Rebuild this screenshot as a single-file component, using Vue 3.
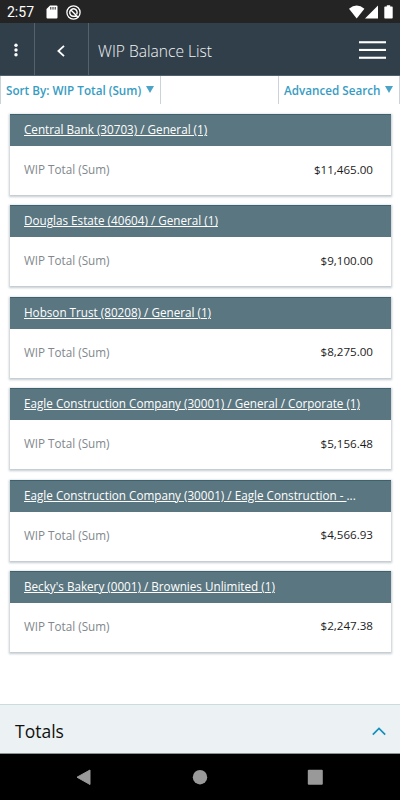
<script setup>
import { ref } from "vue";

const amountLabel = "WIP Total (Sum)";

const items = ref([
  { name: "Central Bank (30703) / General (1)", total: "$11,465.00" },
  { name: "Douglas Estate (40604) / General (1)", total: "$9,100.00" },
  { name: "Hobson Trust (80208) / General (1)", total: "$8,275.00" },
  { name: "Eagle Construction Company (30001) / General / Corporate (1)", total: "$5,156.48" },
  { name: "Eagle Construction Company (30001) / Eagle Construction - ", more: "...", total: "$4,566.93" },
  { name: "Becky's Bakery (0001) / Brownies Unlimited (1)", total: "$2,247.38" },
]);
</script>

<template>
  <div class="screen">
    <div class="status">
      <span class="clock">2:57</span>
      <svg class="sd" width="12" height="14" viewBox="0 0 12 14">
        <path d="M4 0.5H10.5Q11.5 0.5 11.5 1.5V12.5Q11.5 13.5 10.5 13.5H1.5Q0.5 13.5 0.5 12.5V4Z" fill="#fff" />
        <path d="M4.8 2V4.6M7 2V4.6M9.2 2V4.6" stroke="#242424" stroke-width="1" />
      </svg>
      <svg class="sync" width="15" height="15" viewBox="0 0 15 15" fill="none" stroke="#fff">
        <circle cx="7.5" cy="7.5" r="6.6" stroke-width="1.3" />
        <path d="M10.6 9.4A3.7 3.7 0 1 0 7.5 11.2H10.4M5.4 5.4L11.8 12" stroke-width="1.4" />
      </svg>
      <svg class="signals" width="45" height="15" viewBox="0 0 45 15" fill="#fff">
        <path d="M0 3.8Q7.7 -2.8 15.4 3.8L7.7 13.5Z" />
        <path d="M29 0.5V13.5H16Z" />
        <path d="M37.8 0.2H41.2V1.6H43Q43.7 1.6 43.7 2.3V12.8Q43.7 13.5 43 13.5H36Q35.3 13.5 35.3 12.8V2.3Q35.3 1.6 36 1.6H37.8Z" />
      </svg>
    </div>

    <div class="header">
      <div class="cell dots">
        <svg width="6" height="14" viewBox="0 0 6 14" fill="#fff">
          <circle cx="3" cy="2.2" r="1.7" />
          <circle cx="3" cy="7" r="1.7" />
          <circle cx="3" cy="11.8" r="1.7" />
        </svg>
      </div>
      <div class="cell back">
        <svg width="8" height="12" viewBox="0 0 8 12" fill="none" stroke="#fff" stroke-width="1.8">
          <path d="M7 0.8L1.4 6L7 11.2" />
        </svg>
      </div>
      <h1>WIP Balance List</h1>
      <svg class="burger" width="27" height="19" viewBox="0 0 27 19" fill="#fff">
        <rect y="0.2" width="27" height="2.1" />
        <rect y="7.9" width="27" height="2.1" />
        <rect y="15.7" width="27" height="2.1" />
      </svg>
    </div>

    <div class="filters">
      <div class="filter sort">
        <span>Sort By: WIP Total (Sum)</span>
        <svg width="8" height="7" viewBox="0 0 8 7"><path d="M0 0H8L4 7Z" fill="#4ba3c7" /></svg>
      </div>
      <div class="filter search">
        <span>Advanced Search</span>
        <svg width="8" height="7" viewBox="0 0 8 7"><path d="M0 0H8L4 7Z" fill="#4ba3c7" /></svg>
      </div>
    </div>

    <div class="list">
      <div class="card" v-for="item in items" :key="item.name">
        <div class="card-head">
          <a>{{ item.name }}</a><span v-if="item.more">{{ item.more }}</span>
        </div>
        <div class="card-body">
          <span class="label">{{ amountLabel }}</span>
          <span class="amount">{{ item.total }}</span>
        </div>
      </div>
    </div>

    <div class="totals">
      <span>Totals</span>
      <svg width="14" height="9" viewBox="0 0 14 9" fill="none" stroke="#1490bd" stroke-width="1.7">
        <path d="M0.8 7.7L7 1.4L13.2 7.7" />
      </svg>
    </div>

    <div class="navbar">
      <svg width="16" height="17" viewBox="0 0 16 17"><path d="M14 1V15.5L1 8.2Z" fill="#999" stroke="#999" stroke-linejoin="round" /></svg>
      <svg width="16" height="17" viewBox="0 0 16 17"><circle cx="8" cy="8.2" r="7.2" fill="#999" /></svg>
      <svg width="16" height="17" viewBox="0 0 16 17"><rect x="0.8" y="0.8" width="15" height="15" rx="1" fill="#999" /></svg>
    </div>
  </div>
</template>

<style>
body {
  margin: 0;
  background: #fff;
}
</style>

<style scoped>
* {
  box-sizing: border-box;
}
.screen {
  width: 400px;
  height: 800px;
  display: flex;
  flex-direction: column;
  overflow: hidden;
  background: #fff;
  font-family: "Open Sans", "Noto Sans", sans-serif;
  font-size: 11.7px;
}
.status {
  height: 23px;
  flex: none;
  display: flex;
  align-items: center;
  padding: 1px 6px 0 7px;
  background: #242424;
}
.clock {
  width: 39px;
  color: #fff;
  font-family: Roboto, sans-serif;
  font-size: 14px;
}
.sync {
  margin-left: 8px;
}
.signals {
  margin-left: auto;
}
.header {
  height: 53px;
  flex: none;
  display: flex;
  align-items: center;
  background: #313f4b;
  border-bottom: 1px solid #51606d;
}
.cell {
  height: 100%;
  display: flex;
  align-items: center;
  justify-content: center;
  border-right: 1px solid #55616b;
}
.dots {
  width: 35px;
  padding: 1px 2px 0 0;
}
.back {
  width: 54px;
  padding: 4px 1px 0 0;
}
h1 {
  margin: 3px 0 0 9px;
  color: #f2f4f6;
  font-size: 15.6px;
  font-weight: 300;
}
.burger {
  margin: 3px 14px 0 auto;
}
.filters {
  height: 28px;
  flex: none;
  display: flex;
  justify-content: space-between;
  border-left: 1px solid #cbd3da;
  border-right: 1px solid #cbd3da;
}
.filter {
  display: flex;
  align-items: center;
  justify-content: space-between;
  color: #379cc3;
  font-weight: 600;
  white-space: nowrap;
}
.sort {
  width: 160px;
  padding: 0 6px 0 5px;
  border-right: 1px solid #cbd3da;
}
.search {
  width: 121px;
  padding: 0 6px 0 5px;
  border-left: 1px solid #cbd3da;
}
.filter span {
  margin-bottom: 1px;
}
.filter svg {
  margin-bottom: 1px;
}
.list {
  flex: 1;
  padding: 10px 9px 0 10px;
}
.card {
  height: 81px;
  margin-bottom: 10.4px;
  background: #fff;
  box-shadow: 0 1px 2px 1px rgba(80, 105, 120, 0.35);
}
.card-head {
  height: 32px;
  padding-left: 14px;
  line-height: 29px;
  color: #fff;
  background: #5a7680;
  border-top: 1px solid #3d626e;
  white-space: pre;
}
.card-head a {
  text-decoration: underline;
}
.card-body {
  height: 49px;
  display: flex;
  align-items: center;
  justify-content: space-between;
  padding: 0 18px 3px 14px;
}
.label {
  color: #81878c;
}
.amount {
  color: #1c1c1c;
  font-size: 11.6px;
}
.totals {
  height: 50px;
  flex: none;
  display: flex;
  align-items: center;
  justify-content: space-between;
  padding: 4px 14px 0 15px;
  background: #ecf2f3;
  border-top: 1px solid #cddbdf;
  border-bottom: 1px solid #8d9293;
  color: #111;
  font-size: 17.5px;
}
.navbar {
  height: 46px;
  flex: none;
  display: flex;
  align-items: center;
  justify-content: space-between;
  padding: 0 77px 0 76px;
  background: #000;
}
</style>
